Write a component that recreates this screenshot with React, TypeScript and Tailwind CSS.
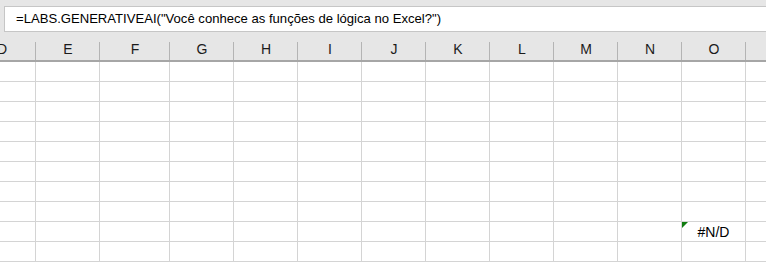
import React from "react";

const cols: { label: string; w: string }[] = [
  { label: "D", w: "w-[36px]" },
  { label: "E", w: "w-[64px]" },
  { label: "F", w: "w-[70px]" },
  { label: "G", w: "w-[64px]" },
  { label: "H", w: "w-[64px]" },
  { label: "I", w: "w-[64px]" },
  { label: "J", w: "w-[64px]" },
  { label: "K", w: "w-[64px]" },
  { label: "L", w: "w-[64px]" },
  { label: "M", w: "w-[64px]" },
  { label: "N", w: "w-[64px]" },
  { label: "O", w: "w-[64px]" },
  { label: "", w: "w-[64px]" },
];

const rows = Array.from({ length: 10 }, (_, i) => i);

export default function App() {
  return (
    <div
      className="w-[766px] h-[262px] overflow-hidden bg-white text-[#1b1b1b]"
      style={{ fontFamily: '"Liberation Sans", Arial, sans-serif' }}
    >
      {/* formula bar */}
      <div className="h-[32px] bg-[#e6e6e6] pt-[6px] pl-[4px]">
        <div className="h-[26px] bg-white border border-r-0 border-[#c6c6c6] flex items-center pl-[11px] text-[13.1px] text-black whitespace-nowrap">
          =LABS.GENERATIVEAI("Você conhece as funções de lógica no Excel?")
        </div>
      </div>
      {/* column headers */}
      <div className="flex h-[30px] bg-[#e6e6e6] border-b-2 border-[#a6a6a6]">
        {cols.map((c, i) => (
          <div
            key={i}
            className={`${c.w} shrink-0 relative flex items-end justify-center pb-[3px] text-[14px] leading-[16px] ${
              i === 0 ? "justify-end pr-[29px]" : ""
            }`}
          >
            {c.label}
            <div className="absolute right-0 top-[10px] bottom-0 w-px bg-[#b4b4b4]" />
          </div>
        ))}
      </div>
      {/* grid */}
      {rows.map((r) => (
        <div key={r} className="flex h-[20px]">
          {cols.map((c, i) => (
            <div
              key={i}
              className={`${c.w} shrink-0 relative border-r border-b border-[#d4d4d4] flex items-center justify-center text-[14px] text-black`}
            >
              {r === 8 && c.label === "O" ? (
                <>
                  <div className="absolute left-0 top-0 w-0 h-0 border-t-[6px] border-r-[6px] border-t-[#107c10] border-r-transparent" />
                  <span className="pt-[2px]">#N/D</span>
                </>
              ) : null}
            </div>
          ))}
        </div>
      ))}
    </div>
  );
}
